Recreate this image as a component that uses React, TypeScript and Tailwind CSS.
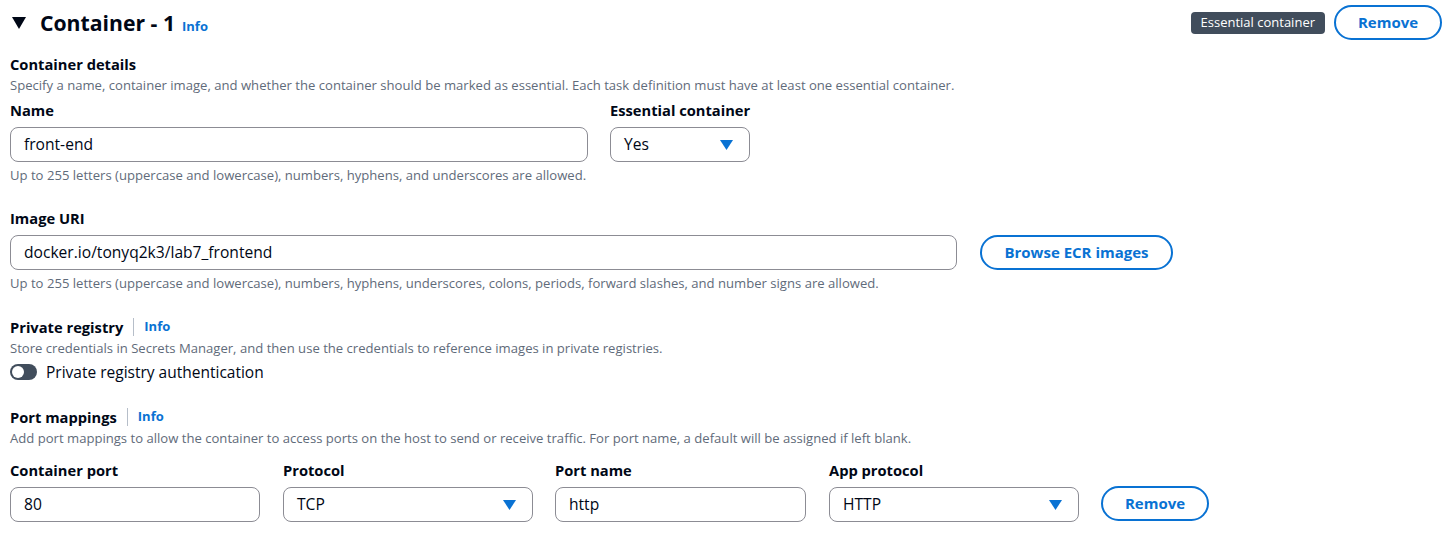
import React from "react";

const font = { fontFamily: '"Open Sans", "Noto Sans", sans-serif' };

function Caret() {
  return (
    <svg width="13" height="10" viewBox="0 0 13 10" className="shrink-0">
      <polygon points="0,0 13,0 6.5,10" fill="#0972d3" />
    </svg>
  );
}

function Info() {
  return <span className="text-[13px] font-bold text-[#0972d3]">Info</span>;
}

function TextInput({ value, className }: { value: string; className: string }) {
  return (
    <div className={`h-[35px] border border-[#8c8c94] rounded-[8px] flex items-center px-[13px] text-[15.6px] text-[#000716] bg-white ${className}`}>
      {value}
    </div>
  );
}

function Select({ value, className }: { value: string; className: string }) {
  return (
    <div className={`h-[35px] border border-[#8c8c94] rounded-[8px] flex items-center justify-between pl-[13px] pr-[16px] text-[15.6px] text-[#000716] bg-white ${className}`}>
      <span>{value}</span>
      <Caret />
    </div>
  );
}

function Label({ children }: { children: React.ReactNode }) {
  return <div className="text-[14.7px] font-bold text-[#000716] leading-[22px]">{children}</div>;
}

function Hint({ children }: { children: React.ReactNode }) {
  return <div className="text-[13.1px] text-[#5f6b7a] leading-[20px] whitespace-nowrap">{children}</div>;
}

function OutlineButton({ children, className }: { children: React.ReactNode; className: string }) {
  return (
    <div className={`h-[35px] border-2 border-[#0972d3] rounded-full flex items-center justify-center text-[15px] font-bold text-[#0972d3] ${className}`}>
      {children}
    </div>
  );
}

export default function App() {
  return (
    <div className="w-[1453px] h-[544px] bg-white overflow-hidden text-[#000716]" style={font}>
      {/* Header */}
      <div className="flex items-start justify-between pl-[12px] pr-[11px] pt-[5px]">
        <div className="flex items-center h-[35px]">
          <svg width="14" height="12" viewBox="0 0 14 12" className="mr-[14px]">
            <polygon points="0,0 14,0 7,12" fill="#000716" />
          </svg>
          <span className="text-[21.2px] font-bold leading-[28px]">Container - 1</span>
          <span className="ml-[7px] mt-[4px]"><Info /></span>
        </div>
        <div className="flex items-center gap-[9px]">
          <div className="h-[22px] px-[10px] rounded-[4px] bg-[#414d5c] text-white text-[13px] flex items-center">
            Essential container
          </div>
          <OutlineButton className="w-[108px]">Remove</OutlineButton>
        </div>
      </div>

      <div className="px-[10px]">
        {/* Container details */}
        <div className="mt-[13px]">
          <Label>Container details</Label>
          <Hint>Specify a name, container image, and whether the container should be marked as essential. Each task definition must have at least one essential container.</Hint>
        </div>

        <div className="flex gap-[22px] mt-[4px]">
          <div className="flex flex-col w-[578px] shrink-0">
            <Label>Name</Label>
            <TextInput value="front-end" className="w-[578px] mt-[6px]" />
            <div className="mt-[3px]"><Hint>Up to 255 letters (uppercase and lowercase), numbers, hyphens, and underscores are allowed.</Hint></div>
          </div>
          <div className="flex flex-col">
            <Label>Essential container</Label>
            <Select value="Yes" className="w-[140px] mt-[6px]" />
          </div>
        </div>

        {/* Image URI */}
        <div className="mt-[22px]">
          <Label>Image URI</Label>
          <div className="flex items-center gap-[23px] mt-[6px]">
            <TextInput value="docker.io/tonyq2k3/lab7_frontend" className="w-[947px]" />
            <OutlineButton className="w-[193px]">Browse ECR images</OutlineButton>
          </div>
          <div className="mt-[3px]"><Hint>Up to 255 letters (uppercase and lowercase), numbers, hyphens, underscores, colons, periods, forward slashes, and number signs are allowed.</Hint></div>
        </div>

        {/* Private registry */}
        <div className="mt-[23px]">
          <div className="flex items-center">
            <Label>Private registry</Label>
            <div className="w-px h-[18px] bg-[#b6bec9] mx-[10px]" />
            <Info />
          </div>
          <Hint>Store credentials in Secrets Manager, and then use the credentials to reference images in private registries.</Hint>
          <div className="flex items-center mt-[3px] h-[22px]">
            <div className="w-[27px] h-[16px] rounded-full bg-[#414d5c] flex items-center pl-[2px] mr-[9px]">
              <div className="w-[12px] h-[12px] rounded-full bg-white" />
            </div>
            <span className="text-[15.5px] leading-[22px]">Private registry authentication</span>
          </div>
        </div>

        {/* Port mappings */}
        <div className="mt-[23px]">
          <div className="flex items-center">
            <Label>Port mappings</Label>
            <div className="w-px h-[18px] bg-[#b6bec9] mx-[10px]" />
            <Info />
          </div>
          <Hint>Add port mappings to allow the container to access ports on the host to send or receive traffic. For port name, a default will be assigned if left blank.</Hint>
        </div>

        <div className="flex items-end mt-[11px]">
          <div className="flex flex-col w-[250px]">
            <Label>Container port</Label>
            <TextInput value="80" className="w-[250px] mt-[6px]" />
          </div>
          <div className="flex flex-col w-[250px] ml-[23px]">
            <Label>Protocol</Label>
            <Select value="TCP" className="w-[250px] mt-[6px]" />
          </div>
          <div className="flex flex-col w-[251px] ml-[22px]">
            <Label>Port name</Label>
            <TextInput value="http" className="w-[251px] mt-[6px]" />
          </div>
          <div className="flex flex-col w-[250px] ml-[23px]">
            <Label>App protocol</Label>
            <Select value="HTTP" className="w-[250px] mt-[6px]" />
          </div>
          <OutlineButton className="w-[108px] ml-[22px] h-[34px] mb-px">Remove</OutlineButton>
        </div>
      </div>
    </div>
  );
}
